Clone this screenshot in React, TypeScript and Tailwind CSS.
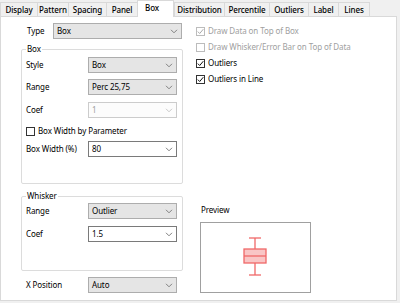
import React from "react";

type Variant = "ro" | "edit" | "dis";

const Chevron = ({ color }: { color: string }) => (
  <svg width="8" height="5" viewBox="0 0 8 5" className="shrink-0">
    <path d="M1 0.8 L4 3.8 L7 0.8" fill="none" stroke={color} strokeWidth="1" />
  </svg>
);

const Combo = ({ value, variant = "ro", w = "w-[89px]" }: { value: string; variant?: Variant; w?: string }) => {
  const cls =
    variant === "ro"
      ? "bg-[#e5e5e5] border-[#adadad] text-black"
      : variant === "edit"
      ? "bg-white border-[#7a7a7a] text-black"
      : "bg-[#fcfcfc] border-[#cccccc] text-[#a0a0a0]";
  return (
    <div className={`${w} h-[16px] border ${cls} flex items-center justify-between pl-[3px] pr-[3px]`}>
      <span className="leading-none">{value}</span>
      <Chevron color={variant === "dis" ? "#c8c8c8" : "#808080"} />
    </div>
  );
};

const Check = ({ checked, disabled }: { checked: boolean; disabled?: boolean }) => (
  <div
    className={`w-[9px] h-[9px] border bg-white flex items-center justify-center shrink-0 ${
      disabled ? "border-[#bcbcbc]" : "border-[#333333]"
    }`}
  >
    {checked && (
      <svg width="7" height="7" viewBox="0 0 7 7">
        <path d="M0.8 3.6 L2.7 5.5 L6.3 1.2" fill="none" stroke={disabled ? "#a8a8a8" : "#111111"} strokeWidth="1" />
      </svg>
    )}
  </div>
);

const tabs: { label: string; w: string; sel?: boolean; last?: boolean }[] = [
  { label: "Display", w: "w-[37px]" },
  { label: "Pattern", w: "w-[31px]" },
  { label: "Spacing", w: "w-[38px]" },
  { label: "Panel", w: "w-[31px]" },
  { label: "Box", w: "w-[37px]", sel: true },
  { label: "Distribution", w: "w-[50px]" },
  { label: "Percentile", w: "w-[45px]" },
  { label: "Outliers", w: "w-[39px]" },
  { label: "Label", w: "w-[30px]" },
  { label: "Lines", w: "w-[32px]", last: true },
];

const Row = ({ label, children, lw = "w-[62px]" }: { label: string; children: React.ReactNode; lw?: string }) => (
  <div className="flex items-center h-[16px]">
    <span className={`${lw} leading-none`}>{label}</span>
    {children}
  </div>
);

export default function App() {
  return (
    <div
      className="w-[400px] h-[303px] bg-[#f0f0f0] overflow-hidden text-[8px] tracking-[-0.1px] text-black"
      style={{ fontFamily: '"Noto Sans", "Open Sans", sans-serif' }}
    >
      <div className="flex items-end h-[16px]">
        {tabs.map((t) =>
          t.sel ? (
            <div
              key={t.label}
              className={`${t.w} h-[17px] -mb-px relative z-10 bg-white border-t border-l border-r border-[#d9d9d9] pl-[7px] pt-[1px] leading-[12px] font-medium`}
            >
              {t.label}
            </div>
          ) : (
            <div
              key={t.label}
              className={`${t.w} h-[14px] border-t border-l ${t.last ? "border-r" : ""} border-[#d9d9d9] flex items-center justify-center leading-none font-medium whitespace-nowrap`}
            >
              {t.label}
            </div>
          )
        )}
      </div>
      <div className="w-[397px] h-[285px] bg-white border border-[#d9d9d9] flex">
        {/* left column */}
        <div className="flex flex-col pl-[20px] w-[183px] pt-[6px]">
          <div className="flex items-center h-[16px]">
            <span className="w-[26px] ml-[6px] leading-none">Type</span>
            <Combo value="Box" w="w-[129px]" />
          </div>

          <div className="relative mt-[10px] w-[162px] h-[135px] border border-[#dcdcdc] rounded-[2px] pt-[7px] pl-[4px]">
            <span className="absolute left-[4px] -top-[7px] px-[1px] bg-white leading-[12px]">Box</span>
            <Row label="Style">
              <Combo value="Box" />
            </Row>
            <div className="mt-[6px]">
              <Row label="Range">
                <Combo value="Perc 25,75" />
              </Row>
            </div>
            <div className="mt-[7px]">
              <Row label="Coef">
                <Combo value="1" variant="dis" />
              </Row>
            </div>
            <div className="mt-[7px] h-[12px] flex items-center gap-[3px]">
              <Check checked={false} />
              <span className="leading-none">Box Width by Parameter</span>
            </div>
            <div className="mt-[4px]">
              <Row label="Box Width (%)">
                <Combo value="80" variant="edit" />
              </Row>
            </div>
          </div>

          <div className="relative mt-[12px] w-[162px] h-[75px] border border-[#dcdcdc] rounded-[2px] pt-[6px] pl-[4px]">
            <span className="absolute left-[4px] -top-[7px] px-[1px] bg-white leading-[12px]">Whisker</span>
            <Row label="Range">
              <Combo value="Outlier" />
            </Row>
            <div className="mt-[7px]">
              <Row label="Coef">
                <Combo value="1.5" variant="edit" />
              </Row>
            </div>
          </div>

          <div className="mt-[6px] pl-[5px]">
            <Row label="X Position">
              <Combo value="Auto" />
            </Row>
          </div>
        </div>

        {/* right column */}
        <div className="flex flex-col pl-[12px] pt-[6px]">
          <div className="h-[16px] flex items-center gap-[3px] text-[#a0a0a0]">
            <Check checked disabled />
            <span className="leading-none">Draw Data on Top of Box</span>
          </div>
          <div className="h-[16px] flex items-center gap-[3px] text-[#a0a0a0]">
            <Check checked={false} disabled />
            <span className="leading-none">Draw Whisker/Error Bar on Top of Data</span>
          </div>
          <div className="h-[16px] flex items-center gap-[3px]">
            <Check checked />
            <span className="leading-none">Outliers</span>
          </div>
          <div className="h-[16px] flex items-center gap-[3px]">
            <Check checked />
            <span className="leading-none">Outliers in Line</span>
          </div>

          <div className="mt-[117px] ml-[5px] h-[12px] flex items-center leading-none">Preview</div>
          <div className="mt-[6px] ml-[4px] w-[111px] h-[71px] border border-[#a0a0a0] bg-white">
            <svg width="109" height="69" viewBox="0 0 109 69">
              <g stroke="#f06868" strokeWidth="1.3" fill="none">
                <line x1="48" y1="15" x2="60" y2="15" />
                <line x1="54" y1="15" x2="54" y2="26" />
                <rect x="43" y="26" width="22" height="14" fill="#f9c6c6" />
                <line x1="43" y1="33" x2="65" y2="33" />
                <line x1="54" y1="40" x2="54" y2="52" />
                <line x1="48" y1="52" x2="60" y2="52" />
              </g>
            </svg>
          </div>
        </div>
      </div>
    </div>
  );
}
